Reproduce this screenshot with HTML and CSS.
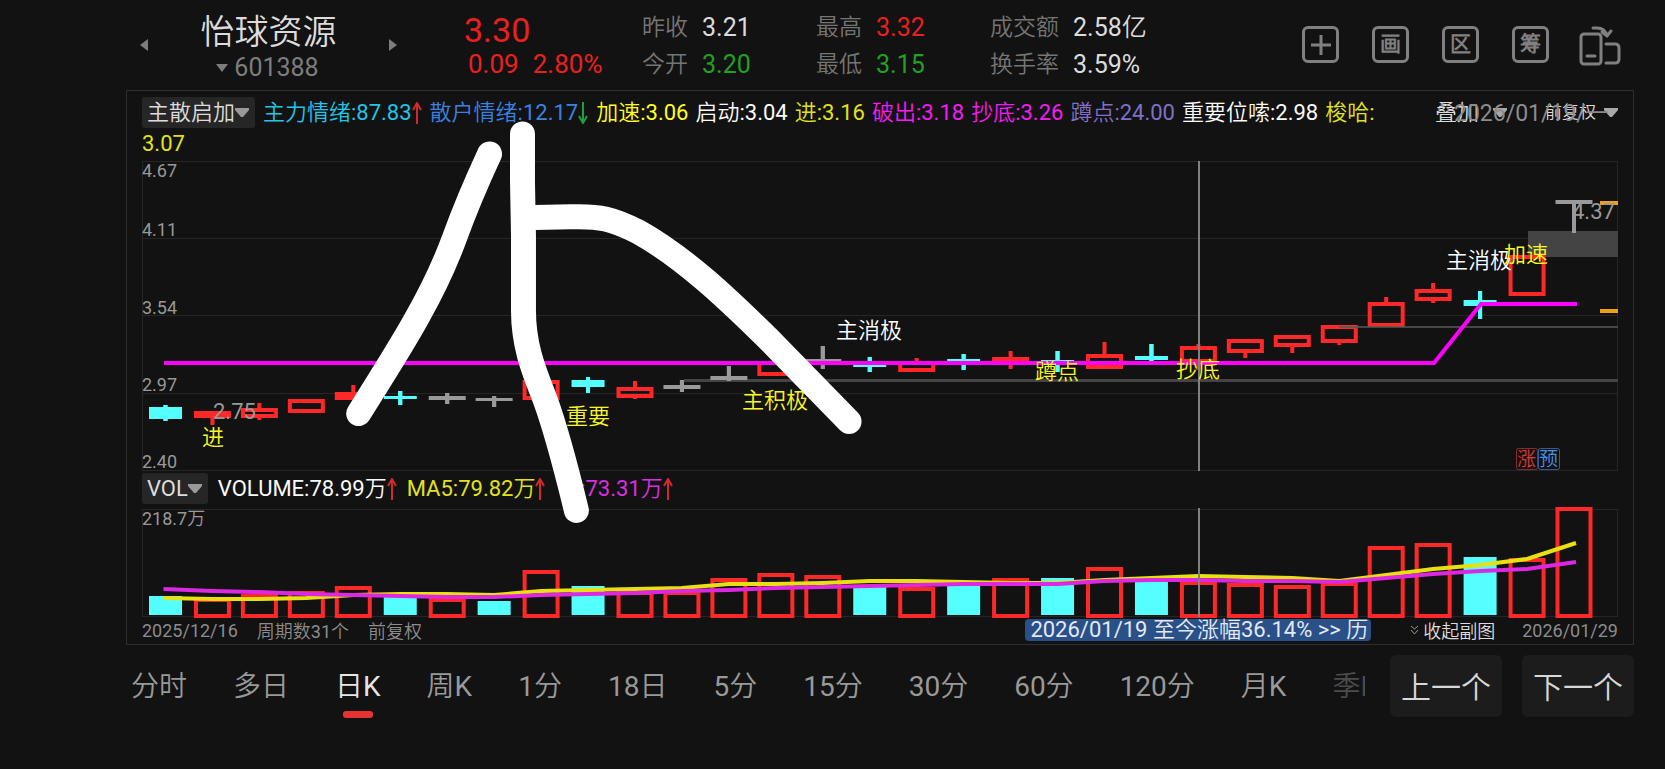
FILE: index.html
```html
<!DOCTYPE html>
<html lang="zh-CN">
<head>
<meta charset="utf-8">
<title>怡球资源 601388</title>
<meta name="viewport" content="width=device-width, initial-scale=1">
<link rel="stylesheet" href="styles.css">
</head>
<body>
<header class="top">
  <div class="stock">
    <button class="step" aria-label="上一只"><svg width="8" height="14" viewBox="0 0 8 14"><path d="M8 1v12L0 7z"/></svg></button>
    <div class="stock-id">
      <h1 class="stock-name">怡球资源</h1>
      <button class="stock-code"><svg width="12" height="8" viewBox="0 0 12 8"><path d="M0 0h12L6 8z"/></svg>601388</button>
    </div>
    <button class="step" aria-label="下一只"><svg width="8" height="14" viewBox="0 0 8 14"><path d="M0 1v12l8-6z"/></svg></button>
  </div>
  <div class="price">
    <div class="price-now">3.30</div>
    <div class="price-diff"><span>0.09</span><span>2.80%</span></div>
  </div>
  <dl class="stats">
    <div><dt>昨收</dt><dd>3.21</dd></div>
    <div><dt>最高</dt><dd class="up">3.32</dd></div>
    <div><dt>成交额</dt><dd>2.58亿</dd></div>
    <div><dt>今开</dt><dd class="down">3.20</dd></div>
    <div><dt>最低</dt><dd class="down">3.15</dd></div>
    <div><dt>换手率</dt><dd>3.59%</dd></div>
  </dl>
  <nav class="tools">
    <button class="tool" aria-label="添加"><svg width="20" height="20" viewBox="0 0 20 20"><path d="M10 0v20M0 10h20"/></svg></button>
    <button class="tool">画</button>
    <button class="tool">区</button>
    <button class="tool">筹</button>
    <button class="rotate" aria-label="旋转屏幕"><svg width="42" height="40" viewBox="0 0 42 40"><rect x="2" y="8" width="20" height="30" rx="3"/><path d="M8 30h8M27 18h9q4 0 4 4v11q0 4-4 4h-9M14 2h4q8 0 10 8M23 6l5 4 4-5"/></svg></button>
  </nav>
</header>

<main class="panel">
  <div class="legend legend-main">
    <div class="legend-text">
      <button class="pick">主散启加<svg width="14" height="9" viewBox="0 0 14 9"><path d="M0 0h14v2L8 9H6L0 2z"/></svg></button>
      <span class="c-cyan">主力情绪:87.83<svg class="arrow rise" width="10" height="22" viewBox="0 0 10 22"><path d="M5 22V1M1 8l4-7 4 7"/></svg></span>
      <span class="c-blue">散户情绪:12.17<svg class="arrow fall" width="10" height="22" viewBox="0 0 10 22"><path d="M5 0v21M1 14l4 7 4-7"/></svg></span>
      <span class="c-yellow">加速:3.06</span>
      <span class="c-white">启动:3.04</span>
      <span class="c-gold">进:3.16</span>
      <span class="c-magenta">破出:3.18</span>
      <span class="c-magenta">抄底:3.26</span>
      <span class="c-violet">蹲点:24.00</span>
      <span class="c-white">重要位嗦:2.98</span>
      <span class="c-gold">梭哈:</span>
      <span class="c-gold legend-wrap">3.07</span>
    </div>
    <div class="legend-tools">
      <button class="overlay-btn">叠加<svg width="14" height="9" viewBox="0 0 14 9"><path d="M0 0h14v2L8 9H6L0 2z"/></svg></button>
      <button class="adjust-btn">前复权<svg width="14" height="9" viewBox="0 0 14 9"><path d="M0 0h14v2L8 9H6L0 2z"/></svg></button>
      <span class="cursor-date">2026/01/19/一</span>
    </div>
  </div>

  <svg class="chart" id="price-chart" viewBox="142 160 1476 312" role="img" aria-label="日K线"></svg>

  <div class="legend legend-vol">
    <button class="pick">VOL<svg width="14" height="9" viewBox="0 0 14 9"><path d="M0 0h14v2L8 9H6L0 2z"/></svg></button>
    <span class="c-white">VOLUME:78.99万<svg class="arrow rise" width="10" height="22" viewBox="0 0 10 22"><path d="M5 22V1M1 8l4-7 4 7"/></svg></span>
    <span class="c-gold">MA5:79.82万<svg class="arrow rise" width="10" height="22" viewBox="0 0 10 22"><path d="M5 22V1M1 8l4-7 4 7"/></svg></span>
    <span class="c-orchid">10:73.31万<svg class="arrow rise" width="10" height="22" viewBox="0 0 10 22"><path d="M5 22V1M1 8l4-7 4 7"/></svg></span>
  </div>

  <svg class="chart" id="volume-chart" viewBox="142 508 1476 110" role="img" aria-label="成交量"></svg>

  <div class="range">
    <span>2025/12/16</span>
    <span>周期数31个</span>
    <span>前复权</span>
    <a class="gain" href="#history">2026/01/19 至今涨幅36.14% &gt;&gt; 历</a>
    <button class="fold"><svg width="9" height="10" viewBox="0 0 9 10"><path d="M1 1l3.500 3L8 1M1 5l3.500 4L8 5"/></svg>收起副图</button>
    <span>2026/01/29</span>
  </div>

  <svg class="doodle" viewBox="126 90 1508 554" aria-hidden="true">
    <path d="M489 153C469 196 463 212 454 237C443 267 431 291 417 316C400 347 379 379 358 413"/>
    <path d="M522 133V180L523 235V310C523 350 537 378 545 400S566 469 576 510"/>
    <path d="M523 217L570 216C600 215 612 218 638 231C690 260 740 311 767 337L849 421"/>
  </svg>
</main>

<footer class="bottom">
  <nav class="tabs">
    <button>分时</button><button>多日</button><button class="on">日K</button><button>周K</button><button>1分</button><button>18日</button><button>5分</button><button>15分</button><button>30分</button><button>60分</button><button>120分</button><button>月K</button><button class="faded">季K</button>
  </nav>
  <button class="jump">上一个</button>
  <button class="jump">下一个</button>
</footer>
<script src="chart.js"></script>
</body>
</html>
```
FILE: styles.css
```css
* { box-sizing: border-box; }

body {
  margin: 0;
  padding: 0 31px 0 126px;
  min-height: 100vh;
  background: #121212;
  color: #dcdcdc;
  font-family: Roboto, "Noto Sans CJK SC DemiLight", "Noto Sans CJK SC Light", "Noto Sans CJK SC", sans-serif;
  font-size: 22px;
  overflow-x: hidden;
}

button {
  margin: 0;
  padding: 0;
  border: 0;
  background: none;
  color: inherit;
  font: inherit;
  white-space: nowrap;
}

svg { flex: none; }

/* header */
.top { display: flex; height: 90px; }

.stock { display: flex; align-items: center; width: 286px; padding: 0 15px 0 14px; }
.step { display: flex; fill: #7d7d7d; }
.stock-id { flex: 1; display: flex; flex-direction: column; align-items: center; padding-top: 2px; }
.stock-name { margin: 0; font-size: 34px; line-height: 44px; font-weight: 400; }
.stock-code { display: flex; align-items: center; gap: 6px; font-size: 25px; line-height: 28px; color: #7d7d7d; fill: #7d7d7d; margin-right: 2px; }

.price { width: 230px; padding: 10px 0 0 52px; color: #ea2020; }
.price-now { font-size: 34px; line-height: 40px; }
.price-diff { display: flex; gap: 14px; padding-left: 4px; font-size: 26px; line-height: 28px; }

.stats {
  display: grid;
  grid-template-columns: 174px 174px 200px;
  grid-auto-rows: 37px;
  margin: 0;
  padding-top: 9px;
}
.stats div { display: flex; align-items: center; gap: 14px; line-height: 36px; }
.stats dt { font-size: 23px; color: #757575; }
.stats dd { margin: 0; font-size: 25px; }
.stats .up { color: #ea2020; }
.stats .down { color: #22a022; }

.tools { display: flex; align-items: flex-start; gap: 33px; margin-left: auto; padding: 26px 13px 0 0; }
.tool {
  display: flex;
  align-items: center;
  justify-content: center;
  width: 37px;
  height: 37px;
  border: 3px solid #808080;
  border-radius: 6px;
  color: #808080;
  font-size: 21px;
  line-height: 21px;
  font-weight: 700;
}
.tool svg, .rotate svg { display: block; fill: none; stroke: #808080; stroke-width: 3; stroke-linecap: round; }
.rotate { margin-left: -3px; }

/* chart panel */
.panel { position: relative; border: 1px solid #2e2e2e; padding: 6px 15px 0; }
.chart { display: block; width: 100%; height: auto; overflow: visible; }

.legend { display: flex; line-height: 31px; }
.legend-main { height: 63px; justify-content: space-between; }
.legend-text { display: flex; flex-wrap: wrap; align-content: flex-start; column-gap: 7px; width: 1260px; }
.legend-text > span, .legend-vol > span { display: flex; align-items: center; white-space: nowrap; }
.legend-text .pick { margin-right: 1px; }
.legend-text .arrow { margin-right: 1px; }
.legend-wrap { flex-basis: 100%; }
.legend-vol { height: 36px; padding-top: 1px; gap: 10px; align-items: flex-start; }
.pick {
  display: flex;
  align-items: center;
  height: 31px;
  padding: 0 6px 0 5px;
  border-radius: 3px;
  background: #262626;
  fill: #999;
}
.arrow { fill: none; stroke-width: 2; }
.rise { stroke: #d02a2a; }
.fall { stroke: #1e9e3e; }

.legend-tools { position: relative; display: flex; height: 31px; gap: 38px; fill: #a8a8a8; }
.overlay-btn, .adjust-btn { display: flex; align-items: center; font-size: 22px; }
.overlay-btn { gap: 14px; }
.adjust-btn { gap: 8px; font-size: 17px; }
.cursor-date { position: absolute; left: 19px; top: 1px; font-size: 23px; color: #8c8c8c; white-space: nowrap; }

.c-cyan { color: #22c4e8; }
.c-blue { color: #3a82e0; }
.c-yellow { color: #ffff18; }
.c-gold { color: #e2e21c; }
.c-white { color: #fafafa; }
.c-magenta { color: #f41cf4; }
.c-orchid { color: #dc2ee0; }
.c-violet { color: #8070c8; }

.range { display: flex; align-items: center; gap: 19px; height: 26px; padding-bottom: 2px; font-size: 18px; color: #8c8c8c; white-space: nowrap; }
.gain {
  margin: 0 20px 0 auto;
  padding: 0 3px 0 5px;
  border-radius: 4px;
  background: #2a5088;
  color: #e4e8f0;
  font-size: 22px;
  line-height: 22px;
  text-decoration: none;
}
.fold { display: flex; align-items: center; gap: 4px; color: #dcdcdc; margin-right: 8px; }
.fold svg { fill: none; stroke: #999; }

.doodle { position: absolute; left: 0; top: 0; width: 100%; fill: none; stroke: #fff; stroke-width: 25; stroke-linecap: round; pointer-events: none; }

/* chart marks */
.grid { fill: none; stroke: #262626; stroke-width: 1; }
.axis { fill: #999; font-size: 18px; }
.extreme { fill: #999; font-size: 22px; }
.note { font-size: 22px; }
.note-yellow { fill: #f8f820; }
.note-white { fill: #fff; }
.badge-text { font-size: 19px; }
.cross { stroke: #808080; stroke-width: 2; }
.ma { fill: none; stroke-width: 4; }

/* footer */
.bottom { display: flex; align-items: flex-start; gap: 20px; padding-top: 10px; }
.tabs { flex: 1; min-width: 0; display: flex; gap: 46px; margin-right: 5px; padding-left: 5px; overflow: hidden; font-size: 28px; line-height: 64px; color: #999; }
.tabs button { position: relative; height: 64px; }
.tabs .on { color: #e6e6e6; }
.tabs .on::after { content: ""; position: absolute; left: 50%; bottom: 1px; width: 30px; height: 7px; margin-left: -15px; border-radius: 3px; background: #e63232; }
.tabs .faded { color: #4c4c4c; }
.jump { width: 112px; height: 62px; padding-bottom: 2px; border-radius: 6px; background: #1c1c1c; color: #d8d8d8; font-size: 30px; }
```
FILE: chart.js
```js
const NS = "http://www.w3.org/2000/svg";
const RED = "#ff2828", CYAN = "#54ffff", GREY = "#9a9a9a";
const FIRST = 165.5, STEP = 46.95;
const cx = i => FIRST + i * STEP;

function add(svg, name, attrs, text) {
  const el = document.createElementNS(NS, name);
  for (const k in attrs) el.setAttribute(k, attrs[k]);
  if (text) el.textContent = text;
  svg.appendChild(el);
}
function box(svg, i, top, bottom, colour) {
  const h = bottom - top;
  if (colour === RED && h > 9) {
    add(svg, "rect", { x: cx(i) - 16.5, y: top + 2, width: 33, height: h - 4, fill: "none", stroke: colour, "stroke-width": 4 });
  } else {
    const w = colour === CYAN ? 33 : 37;
    add(svg, "rect", { x: cx(i) - w / 2, y: top, width: w, height: h, fill: colour });
  }
}
function wick(svg, i, a, b, colour) {
  if (b > a) add(svg, "rect", { x: cx(i) - 2, y: a, width: 4, height: b - a, fill: colour });
}

/* body top, body bottom, high, low, colour */
const candles = [
  [407, 419, 405, 421, CYAN], [411, 418, 411, 425, RED], [408, 418, 403, 420, RED], [399, 413, 399, 413, RED],
  [392, 400, 385, 400, RED], [396, 399, 391, 405, CYAN], [396, 400, 393, 404, GREY], [398, 401, 396, 407, GREY],
  [380, 400, 380, 400, RED], [380, 387, 377, 393, CYAN], [387, 398, 381, 399, RED], [385, 389, 380, 392, GREY],
  [376, 380, 366, 381, GREY], [361, 376, 361, 376, RED], [359, 362, 346, 369, GREY], [365, 367, 357, 372, CYAN],
  [361, 372, 358, 372, RED], [359, 362, 354, 370, CYAN], [357, 363, 351, 369, RED], [360, 363, 351, 372, CYAN],
  [354, 369, 342, 369, RED], [356, 360, 344, 361, CYAN], [346, 363, 344, 370, RED], [339, 353, 339, 358, RED],
  [335, 347, 335, 353, RED], [325, 343, 325, 345, RED], [302, 327, 297, 327, RED], [289, 301, 283, 303, RED],
  [300, 306, 291, 319, CYAN], [255, 296, 255, 296, RED], [200, 204, 200, 233, GREY]
];

const p = document.getElementById("price-chart");
add(p, "rect", { x: 142.5, y: 161.5, width: 1475, height: 309, class: "grid" });
[238.5, 315.5, 393.5].forEach(y => add(p, "path", { d: `M142 ${y}H1618`, class: "grid" }));
add(p, "rect", { x: 1528, y: 231, width: 90, height: 26, fill: "#444" });
add(p, "rect", { x: 684, y: 379, width: 934, height: 3, fill: "#444" });

candles.forEach(([top, bottom, high, low, c], i) => {
  wick(p, i, high, top, c);
  wick(p, i, bottom, low, c);
  if (c !== RED) wick(p, i, high, low, c);
  box(p, i, top, bottom, c);
});
add(p, "rect", { x: 1339, y: 326, width: 279, height: 2, fill: "#555", opacity: 0.8 });
add(p, "path", { d: "M164 363H1434L1481 304H1577", class: "ma", stroke: "#ff00ff" });
add(p, "rect", { x: 1600, y: 201, width: 18, height: 4, fill: "#f0a010" });
add(p, "rect", { x: 1600, y: 309, width: 18, height: 4, fill: "#f0a010" });
add(p, "path", { d: "M1199 161V471", class: "cross" });

[["4.67", 177], ["4.11", 236], ["3.54", 314], ["2.97", 391], ["2.40", 468]]
  .forEach(([t, y]) => add(p, "text", { x: 142, y, class: "axis" }, t));
add(p, "text", { x: 213, y: 419, class: "extreme" }, "2.75");
add(p, "text", { x: 1572, y: 219, class: "extreme" }, "4.37");

[
  ["进", 202, 445, "yellow"], ["重要", 566, 424, "yellow"], ["主积极", 742, 408, "yellow"],
  ["主消极", 836, 338, "white"], ["蹲点", 1035, 379, "yellow"], ["抄底", 1176, 377, "yellow"],
  ["主消极", 1446, 268, "white"], ["加速", 1504, 262, "yellow"]
].forEach(([t, x, y, c]) => add(p, "text", { x, y, class: `note note-${c}` }, t));

[["涨", 1516, "#d83a34"], ["预", 1538, "#4a90e8"]].forEach(([t, x, c]) => {
  add(p, "rect", { x: x + 0.5, y: 448.5, width: 21, height: 21, rx: 2, fill: "#121212", stroke: c, "stroke-opacity": 0.6 });
  add(p, "text", { x: x + 1, y: 466, class: "badge-text", fill: c }, t);
});

/* volume */
const bars = [596, 598, 594, 591, 586, 597, 598, 601, 570, 586, 591, 591, 578, 573, 575, 586, 587, 586, 578, 578,
  567, 581, 581, 583, 585, 582, 546, 543, 557, 558, 507];
const ma5 = [598, 599, 599, 598, 595, 594, 594, 595, 591, 590, 589, 588, 584, 584, 583, 581, 581, 582, 583, 583,
  580, 578, 576, 577, 578, 581, 575, 569, 565, 559, 543];
const ma10 = [589, 591, 592, 594, 595, 596, 597, 597, 595, 594, 593, 591, 590, 588, 587, 586, 585, 584, 584, 584,
  581, 580, 580, 581, 581, 582, 578, 574, 571, 569, 562];
/* index 7 is the one falling session drawn as a filled bar although its candle is flat */
const volumeColour = i => (i === 7 || candles[i][4] === CYAN ? CYAN : RED);

const v = document.getElementById("volume-chart");
add(v, "rect", { x: 142.5, y: 509.5, width: 1475, height: 107, class: "grid" });
bars.forEach((top, i) => {
  const c = volumeColour(i);
  box(v, i, top, c === CYAN ? 615 : 618, c);
});
const line = a => a.map((y, i) => `${cx(i) + (i === 0 ? -2 : i === 30 ? 2 : 0)},${y}`).join(" ");
add(v, "polyline", { points: line(ma5), class: "ma", stroke: "#e8e010" });
add(v, "polyline", { points: line(ma10), class: "ma", stroke: "#dc28e0" });
add(v, "path", { d: "M1199 508V617", class: "cross" });
add(v, "text", { x: 142, y: 525, class: "axis" }, "218.7万");
```
